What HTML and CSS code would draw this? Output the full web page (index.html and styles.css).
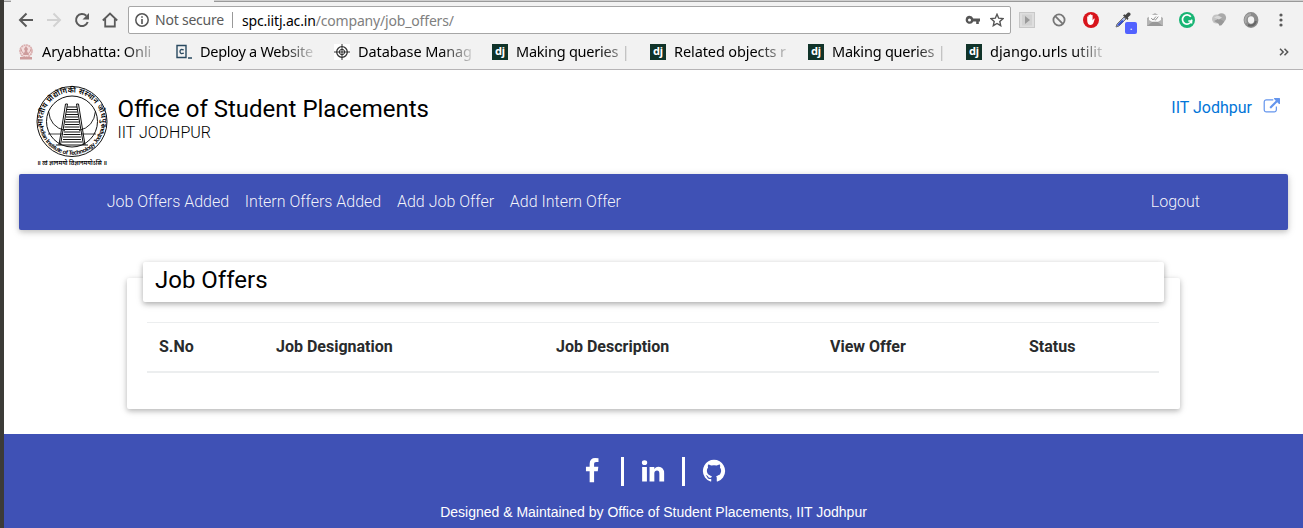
FILE: index.html
```html
<!DOCTYPE html>
<html lang="en">
<head>
<meta charset="utf-8">
<title>Office of Student Placements</title>
<link rel="stylesheet" href="styles.css">
</head>
<body>
<div class="window">
  <div class="chrome">
    <div class="tabs"><i class="tab-edge left"></i><i class="tab"></i><i class="tab-edge right"></i></div>
    <div class="toolbar">
      <div class="nav-buttons">
        <svg width="16" height="16" viewBox="0 0 16 16" fill="none" stroke="#5a5a5a" stroke-width="2"><path d="M15 8H2.5M8.5 1.5L2 8l6.500 6.500"/></svg>
        <svg width="16" height="16" viewBox="0 0 16 16" fill="none" stroke="#d2d2d2" stroke-width="2"><path d="M1 8h12.500M7.500 1.500L14 8l-6.500 6.500"/></svg>
        <svg width="16" height="16" viewBox="0 0 16 16" fill="none" stroke="#5a5a5a" stroke-width="2"><path d="M13.700 10A6 6 0 1 1 12.300 3.800"/><path d="M15 1v6.500H8.500z" fill="#5a5a5a" stroke="none"/></svg>
        <svg width="16" height="16" viewBox="0 0 16 16" fill="none" stroke="#5a5a5a" stroke-width="1.800"><path d="M.8 8.500L8 1.500l7.200 7M3.200 7v7.500h9.600V7"/></svg>
      </div>
      <div class="address">
        <svg width="14" height="14" viewBox="0 0 14 14"><circle cx="7" cy="7" r="6.200" fill="none" stroke="#555" stroke-width="1.500"/><path d="M6.200 3.200h1.600v1.600H6.200zM6.200 6h1.600v5H6.200z" fill="#555"/></svg>
        <span class="secure">Not secure</span>
        <span class="url"><b>spc.iitj.ac.in</b>/company/job_offers/</span>
        <svg class="key" width="15" height="10" viewBox="0 0 15 10"><path fill="#555" fill-rule="evenodd" d="M4.500.8a4 4 0 0 1 3.800 2.700H15v3h-1.200V9h-2.600V6.500H8.300A4 4 0 1 1 4.500.8zm0 2.600a1.500 1.500 0 1 0 0 3 1.500 1.500 0 0 0 0-3z"/></svg>
        <svg width="14" height="14" viewBox="0 0 14 14" fill="none" stroke="#555" stroke-width="1.400"><path d="M7 1.300l1.700 3.900 4.300.4-3.200 2.900.9 4.200L7 10.500l-3.700 2.200.9-4.200L1 5.600l4.300-.4z"/></svg>
      </div>
      <div class="extensions">
        <svg viewBox="0 0 16 16"><rect x=".5" y=".5" width="15" height="15" fill="#dedede" stroke="#c8c8c8"/><rect x="3" y="2.500" width="10" height="11" fill="#d2d2d2"/><path d="M6 4l5 4-5 4z" fill="#999"/></svg>
        <svg viewBox="0 0 16 16" fill="none" stroke="#777" stroke-width="1.800"><circle cx="8" cy="8" r="5.600"/><path d="M4.200 4.200l7.600 7.600"/></svg>
        <svg viewBox="0 0 16 16"><circle cx="8" cy="8" r="8" fill="#d8151c"/><path d="M4.200 8.200V5q0-.7.6-.7t.6.7v2.300V3.500q0-.7.7-.7t.7.700V7V2.900q0-.7.7-.7t.7.700V7V3.500q0-.7.7-.7t.7.700v5l1.100-1.700q.6-.6 1.100-.1l-1.500 4.600Q9.500 13 7.500 13q-3.300 0-3.300-4.800z" fill="#fff"/></svg>
        <span class="picker"><svg viewBox="0 0 16 16"><path d="M1 15l1-3 7-7 2 2-7 7z" fill="#aebce8" stroke="#727272"/><path d="M2 14l1-2 4-4 2 1-4 4z" fill="#3550d0"/><path d="M8 3.500l4.500 4.500 1-1.400-.7-1L15.500 3Q16 0 13 .5l-2.600 2.400-1-.6z" fill="#444"/></svg><i>.</i></span>
        <svg viewBox="0 0 16 16"><path d="M0 6l8-5 8 5v8H0z" fill="#b4b4b4"/><path d="M2 3h12v5l-6 3.500L2 8z" fill="#fafafa"/><path d="M4.200 6l1.800 2 3-3.500M7.500 7.500l.8.700 3-3.600" fill="none" stroke="#888" stroke-width=".9"/><path d="M0 14l5.500-4.200h5L16 14z" fill="#999"/></svg>
        <svg viewBox="0 0 16 16"><circle cx="8" cy="8" r="8" fill="#18b574"/><path d="M11.800 4.800A4.600 4.600 0 1 0 12.400 9H9.300" fill="none" stroke="#fff" stroke-width="1.700"/><path d="M12.600 7.500v4" stroke="#fff" stroke-width="1.400"/></svg>
        <svg viewBox="0 0 16 16"><circle cx="5.500" cy="7" r="4.500" fill="#c4c4c4"/><circle cx="10.500" cy="5.800" r="4.600" fill="#aaa"/><path d="M3 9l5-2.500 5.500 3-3 3.800-2 .5-1-2z" fill="#999"/><path d="M3 5.500l4-2 4 2-3 2z" fill="#d8d8d8"/></svg>
        <svg viewBox="0 0 16 16"><ellipse cx="8" cy="8" rx="5.300" ry="5.800" fill="none" stroke="#8c8c8c" stroke-width="4.200"/><path d="M3 11A6 6 0 0 1 8 2.200" fill="none" stroke="#aaa" stroke-width="2"/><path d="M5 13q6 2 8-4" fill="none" stroke="#666" stroke-width="2"/></svg>
      </div>
      <svg class="menu" width="4" height="14" viewBox="0 0 4 14" fill="#5a5a5a"><circle cx="2" cy="2" r="1.600"/><circle cx="2" cy="7" r="1.600"/><circle cx="2" cy="12" r="1.600"/></svg>
    </div>
    <div class="bookmarks">
      <div class="bookmark"><svg viewBox="0 0 16 16"><circle cx="8" cy="7" r="6" fill="#f3dddd" stroke="#d9adad" stroke-width="1.600" stroke-dasharray="2 .5"/><path d="M8 2l2 3-1 2 2 4H5l2-4-1-2zM2 13h12v2.500H2z" fill="#cd9c9c"/><path d="M3 5q1 5 5 5t5-5" fill="none" stroke="#cd9c9c"/></svg><span>Aryabhatta: Onli</span></div>
      <div class="bookmark deploy"><svg viewBox="0 0 16 16"><path d="M1 1.500h9v12H1zM12 14h4" fill="none" stroke="#294960" stroke-width="1.400"/><path d="M7.800 6Q4 4.500 4 7.500t3.800 1.600" fill="none" stroke="#294960" stroke-width="1.300"/></svg><span>Deploy a Website</span></div>
      <div class="bookmark database"><svg viewBox="0 0 16 16"><path fill="#fff" d="M0 0h16v16H0z"/><g fill="none" stroke="#333"><circle cx="8" cy="8" r="5.300" stroke-width="1.300"/><circle cx="8" cy="8" r="2.700"/><path d="M8 0v16M0 8h16"/></g></svg><span>Database Manag</span></div>
      <div class="bookmark making"><i class="dj">dj</i><span>Making queries |</span></div>
      <div class="bookmark related"><i class="dj">dj</i><span>Related objects r</span></div>
      <div class="bookmark making"><i class="dj">dj</i><span>Making queries |</span></div>
      <div class="bookmark urls"><i class="dj">dj</i><span>django.urls utilit</span></div>
      <svg class="more" width="10" height="8" viewBox="0 0 10 8" fill="none" stroke="#555" stroke-width="1.500"><path d="M1 .8L4.200 4 1 7.200M5.500.8L8.700 4 5.500 7.200"/></svg>
    </div>
  </div>

  <div class="page">
    <header class="header">
      <svg class="logo" width="74" height="84" viewBox="0 0 74 84">
        <defs><path id="arc-top" d="M9 48.300A29.300 29.300 0 1 1 63 48.300"/><path id="arc-bottom" d="M3.200 37A32.800 32.800 0 0 0 68.800 37"/></defs>
        <g fill="none" stroke="#111"><circle cx="36" cy="36.500" r="35" stroke-width="1"/><circle cx="36" cy="36.500" r="25.500" stroke-width="1"/>
        <path d="M12.500 26Q14 42 29 45.500M59.500 26Q58 42 43 45.500" stroke-width=".9"/><path d="M12 49h15M45 49h15" stroke-width=".8"/>
        <path d="M31.500 19L24.500 60M40.500 19L47.500 60M31.500 19h-2L23 60M40.500 19h2L49 60M20 60h32" stroke-width="1"/>
        <path d="M31 22h10M31 24.500h10M30.500 27h11M30 29.500h12M30 32h12M29.500 34.500h13M29 37h14M29 39.500h14M28.500 42h15M28 44.500h16M28 47h16M27.500 49.500h17M27 52h18M27 54.500h18M26 57h20" stroke-width="1"/></g>
        <text class="ring hindi"><textPath href="#arc-top" startOffset="7" textLength="101">भारतीय प्रौद्योगिकी संस्थान जोधपुर</textPath></text>
        <text class="ring english"><textPath href="#arc-bottom" startOffset="4" textLength="96">Indian Institute of Technology Jodhpur</textPath></text>
        <text class="motto" x="1" y="80" textLength="70" lengthAdjust="spacingAndGlyphs">॥ त्वं ज्ञानमयो विज्ञानमयोऽसि ॥</text>
      </svg>
      <div class="brand"><h1>Office of Student Placements</h1><p>IIT JODHPUR</p></div>
      <a class="institute">IIT Jodhpur<svg width="17" height="17" viewBox="0 0 1792 1792" fill="#6495ed"><path d="M1472 928v320q0 119-84.500 203.500t-203.500 84.500h-832q-119 0-203.500-84.500t-84.500-203.500v-832q0-119 84.500-203.500t203.500-84.500h704q14 0 23 9t9 23v64q0 14-9 23t-23 9h-704q-66 0-113 47t-47 113v832q0 66 47 113t113 47h832q66 0 113-47t47-113v-320q0-14 9-23t23-9h64q14 0 23 9t9 23zm320-864v512q0 26-19 45t-45 19-45-19l-176-176-652 652q-10 10-23 10t-23-10l-114-114q-10-10-10-23t10-23l652-652-176-176q-19-19-19-45t19-45 45-19h512q26 0 45 19t19 45z"/></svg></a>
    </header>
    <nav class="navbar"><a>Job Offers Added</a><a>Intern Offers Added</a><a>Add Job Offer</a><a>Add Intern Offer</a><a class="logout">Logout</a></nav>
    <main class="card">
      <h2>Job Offers</h2>
      <table>
        <colgroup><col class="c1"><col class="c2"><col class="c3"><col class="c4"><col></colgroup>
        <thead><tr><th>S.No</th><th>Job Designation</th><th>Job Description</th><th>View Offer</th><th>Status</th></tr></thead>
      </table>
    </main>
    <footer class="footer">
      <div class="social">
        <svg width="26" height="26" viewBox="0 0 1792 1792"><path d="M1343 12v264h-157q-86 0-116 36t-30 108v189h293l-39 296h-254v759h-306v-759h-255v-296h255v-218q0-186 104-288.500t277-102.500q147 0 228 12z"/></svg>
        <i></i>
        <svg width="26" height="26" viewBox="0 0 1792 1792"><path d="M477 625v991h-330v-991h330zm21-306q1 73-50.500 122t-135.500 49h-2q-82 0-132-49t-50-122q0-74 51.500-122.500t134.500-48.500 133 48.500 51 122.500zm1166 729v568h-329v-530q0-105-40.500-164.500t-126.500-59.500q-63 0-105.500 34.500t-63.500 85.500q-11 30-11 81v553h-329q2-399 2-647t-1-296l-1-48h329v144h-2q20-32 41-56t56.500-52 87-43.500 114.500-15.500q171 0 275 113.500t104 332.500z"/></svg>
        <i></i>
        <svg width="26" height="26" viewBox="0 0 1792 1792"><path d="M896 128q209 0 385.500 103t279.500 279.500 103 385.500q0 251-146.500 451.500t-378.500 277.500q-27 5-40-7t-13-30q0-3 .5-76.500t.5-134.500q0-97-52-142 57-6 102.500-18t94-39 81-66.500 53-105 20.500-150.500q0-119-79-206 37-91-8-204-28-9-81 11t-92 44l-38 24q-93-26-192-26t-192 26q-16-11-42.500-27t-83.500-38.500-85-13.500q-45 113-8 204-79 87-79 206 0 85 20.500 150t52.500 105 80.500 67 94 39 102.500 18q-39 36-49 103-21 10-45 15t-57 5-65.500-21.500-55.500-62.500q-19-32-48.500-52t-49.500-24l-20-3q-21 0-29 4.500t-5 11.500 9 14 13 12l7 5q22 10 43.500 38t31.500 51l10 23q13 38 44 61.500t67 30 69.500 7 55.500-3.500l23-4q0 38 .5 88.500t.5 54.500q0 18-13 30t-40 7q-232-77-378.500-277.500t-146.500-451.500q0-209 103-385.500t279.500-279.500 385.500-103z"/></svg>
      </div>
      <p>Designed &amp; Maintained by Office of Student Placements, IIT Jodhpur</p>
    </footer>
  </div>
</div>
</body>
</html>
```
FILE: styles.css
```css
* { box-sizing: border-box; }
body { margin: 0; font-family: Roboto, sans-serif; color: #000; overflow: hidden; }
h1, h2, p { margin: 0; font-weight: 400; }
svg { display: block; flex: none; }
.window { height: 528px; border-left: 4px solid #3c3b37; display: flex; flex-direction: column; }

.chrome { height: 70px; flex: none; background: #f2f2f2; border-bottom: 1px solid #b6b4b6; font-family: "Noto Sans", sans-serif; }
.tabs { display: flex; height: 2px; }
.tab { width: 203px; }
.tab-edge { background: #d0d0d0; border-bottom: 1px solid #999; }
.tab-edge.left { width: 7px; }
.tab-edge.right { flex: 1; }
.toolbar { display: flex; align-items: center; height: 36px; padding-left: 14px; }
.nav-buttons { display: flex; gap: 12px; width: 110px; }
.address { display: flex; align-items: center; width: 883px; height: 28px; padding: 0 6px; background: #fff; border: 1px solid #a6a6a6; border-radius: 2px; font-size: 14px; white-space: nowrap; }
.secure { margin-left: 6px; padding-right: 8px; border-right: 1px solid #999; color: #5a5a5a; line-height: 16px; width: 78px; letter-spacing: -.22px; margin-right: 9px; }
.url { flex: 1; color: #808080; letter-spacing: -.17px; }
.url b { color: #000; font-weight: 400; }
.key { margin-right: 10px; }
.extensions { display: flex; gap: 16px; margin-left: 8px; }
.extensions svg { width: 16px; height: 16px; }
.picker { position: relative; }
.picker i { position: absolute; left: 10px; top: 10px; width: 12px; height: 12px; border-radius: 2px; background: #5262ff; color: #fff; font: 10px/9px "Noto Sans", sans-serif; text-align: center; }
.menu { margin-left: 20px; }
.bookmarks { display: flex; align-items: center; height: 28px; padding-left: 14px; }
.bookmark { display: flex; align-items: center; width: 158px; }
.bookmark svg { width: 16px; height: 16px; }
.bookmark span { width: 115px; margin-left: 8px; padding-bottom: 2px; overflow: hidden; white-space: nowrap; font-size: 14.500px; line-height: 22px; letter-spacing: -.1px; -webkit-mask-image: linear-gradient(90deg, #000 72%, rgba(0,0,0,.1)); mask-image: linear-gradient(90deg, #000 72%, rgba(0,0,0,.1)); }
.bookmark.making span { letter-spacing: -.22px; }
.bookmark.deploy span { letter-spacing: -.28px; }
.bookmark.urls span { letter-spacing: .05px; }
.dj { width: 16px; height: 16px; background: #103329; color: #fff; font: 700 11px/14px "Noto Sans", sans-serif; text-align: center; }
.more { margin-left: 155px; }

.page { flex: 1; display: flex; flex-direction: column; background: #fff; }
.header { display: flex; height: 104px; padding: 15px 23px 0 32px; }
.logo { width: 74px; height: 84px; }
.ring { font-family: "Liberation Sans", "Noto Sans Devanagari", sans-serif; }
.hindi { font-size: 7.500px; font-weight: 600; }
.english { font-size: 6px; font-weight: 700; }
.motto { font: 600 6.500px "Noto Sans Devanagari", "Noto Sans", sans-serif; }
.brand { margin-left: 7.500px; padding-top: 9px; }
.brand h1 { font-size: 24px; line-height: 30px; }
.brand p { font-size: 16px; font-weight: 300; line-height: 18px; }
.institute { display: flex; gap: 11px; margin-left: auto; padding-top: 13px; height: 32px; font-size: 16px; line-height: 19px; color: #0275d8; }
.navbar { display: flex; align-items: center; gap: 15.700px; height: 56px; margin: 0 15px; padding: 0 88px 0 87.700px; background: #3f51b5; border-radius: 2px; color: #fff; font-size: 16px; font-weight: 300; box-shadow: 0 2px 5px rgba(0,0,0,.16), 0 2px 10px rgba(0,0,0,.12); }
.navbar a { color: rgba(255,255,255,.95); padding-bottom: 1px; }
.navbar .logout { margin-left: auto; }
.card { height: 131px; margin: 48px 123px 25px; border-radius: 2px; padding: 0 16px; box-shadow: 0 2px 5px rgba(0,0,0,.2), 0 2px 8px rgba(0,0,0,.12); }
.card h2 { height: 40px; margin-top: -16px; padding-left: 12px; background: #fff; border-radius: 2px; font-size: 24px; line-height: 36px; box-shadow: 0 2px 5px rgba(0,0,0,.24), 0 2px 8px rgba(0,0,0,.12); }
.card table { table-layout: fixed; width: 1012px; margin: 20px 0 0 4px; border-spacing: 0; }
.card th { height: 51px; padding: 0 12px 2px; border-top: 1px solid #eceeef; border-bottom: 2px solid #eceeef; text-align: left; font-size: 16px; font-weight: 700; color: #292b2c; }
.c1 { width: 117px; } .c2 { width: 280px; } .c3 { width: 274px; } .c4 { width: 199px; }
.footer { flex: 1; padding-top: 22px; background: #3f51b5; color: #fff; text-align: center; }
.social { display: flex; align-items: center; justify-content: center; gap: 16px; height: 30px; padding-right: 1px; fill: #fff; }
.social i { width: 3px; height: 29px; background: #fff; }
.footer p { margin-top: 18px; font: 14px/16px "Liberation Sans", sans-serif; }
```
